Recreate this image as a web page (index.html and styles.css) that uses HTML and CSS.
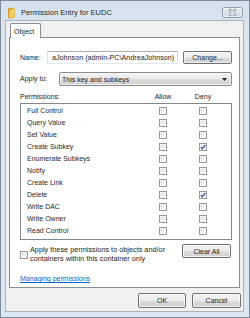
FILE: index.html
```html
<!DOCTYPE html>
<html>
<head>
<meta charset="utf-8">
<link rel="stylesheet" href="styles.css">
</head>
<body>
<div class="window">
  <div class="titlebar">
    <svg class="folder-icon" width="8" height="12" viewBox="0 0 8 12">
      <path d="M1 1.5 L6 0.5 L6 10 L1 11 Z" fill="#c9952a"/>
      <path d="M2 2.5 L7.5 1.5 L7.5 10.5 L2 11.5 Z" fill="#f3cf5f" stroke="#d9a93a" stroke-width="0.6"/>
    </svg>
    <span class="title">Permission Entry for EUDC</span>
    <div class="close-btn">
      <svg width="19" height="9" viewBox="0 0 19 9">
        <path d="M7 2 L12 7 M12 2 L7 7" stroke="#7d8896" stroke-width="2.6" stroke-linecap="round"/>
        <path d="M7 2 L12 7 M12 2 L7 7" stroke="#ffffff" stroke-width="1.1" stroke-linecap="round"/>
      </svg>
    </div>
  </div>
  <div class="client">
    <div class="tabs"><div class="tab">Object</div></div>
    <div class="panel">
      <div class="name-row">
        <span class="lbl name-lbl">Name:</span>
        <div class="textbox"><span class="textbox-text">aJohnson (admin-PC\AndreaJohnson)</span></div>
        <div class="btn change-btn">Change...</div>
      </div>
      <div class="apply-row">
        <span class="lbl apply-lbl">Apply to:</span>
        <div class="combo">
          <span class="combo-text">This key and subkeys</span>
          <svg class="combo-arrow" width="5" height="3" viewBox="0 0 5 3"><path d="M0 0 L5 0 L2.5 3 Z" fill="#222"/></svg>
        </div>
      </div>
      <div class="perm-header">
        <span class="perm-title">Permissions:</span>
        <span class="col-lbl">Allow</span>
        <span></span>
        <span class="col-lbl">Deny</span>
      </div>
      <div class="perm-list">
        <div class="perm-row"><span>Full Control</span><span class="cb"></span><span></span><span class="cb"></span></div>
        <div class="perm-row"><span>Query Value</span><span class="cb"></span><span></span><span class="cb"></span></div>
        <div class="perm-row"><span>Set Value</span><span class="cb"></span><span></span><span class="cb"></span></div>
        <div class="perm-row"><span>Create Subkey</span><span class="cb"></span><span></span><span class="cb"><svg width="6" height="6" viewBox="0 0 6 6"><path d="M0.8 3 L2.3 4.8 L5.3 0.8" stroke="#2f4596" stroke-width="1.1" fill="none"/></svg></span></div>
        <div class="perm-row"><span>Enumerate Subkeys</span><span class="cb"></span><span></span><span class="cb"></span></div>
        <div class="perm-row"><span>Notify</span><span class="cb"></span><span></span><span class="cb"></span></div>
        <div class="perm-row"><span>Create Link</span><span class="cb"></span><span></span><span class="cb"></span></div>
        <div class="perm-row"><span>Delete</span><span class="cb"></span><span></span><span class="cb"><svg width="6" height="6" viewBox="0 0 6 6"><path d="M0.8 3 L2.3 4.8 L5.3 0.8" stroke="#2f4596" stroke-width="1.1" fill="none"/></svg></span></div>
        <div class="perm-row"><span>Write DAC</span><span class="cb"></span><span></span><span class="cb"></span></div>
        <div class="perm-row"><span>Write Owner</span><span class="cb"></span><span></span><span class="cb"></span></div>
        <div class="perm-row"><span>Read Control</span><span class="cb"></span><span></span><span class="cb"></span></div>
      </div>
      <div class="inherit-row">
        <span class="cb inherit-cb"></span>
        <span class="inherit-text">Apply these permissions to objects and/or<br>containers within this container only</span>
        <div class="btn clear-btn">Clear All</div>
      </div>
      <a class="link" href="#">Managing permissions</a>
    </div>
    <div class="dialog-buttons">
      <div class="btn ok-btn">OK</div>
      <div class="btn cancel-btn">Cancel</div>
    </div>
  </div>
</div>
</body>
</html>
```

FILE: styles.css
```css
* { box-sizing: border-box; }
html, body { margin: 0; padding: 0; }
body {
  width: 250px;
  height: 318px;
  overflow: hidden;
  font-family: "Liberation Sans", Arial, sans-serif;
  font-size: 7px;
  color: #1e1e1e;
  background: #ffffff;
}
.window {
  width: 250px;
  height: 318px;
  border: 1px solid #7d8a9a;
  background: linear-gradient(#d5e1ee, #dce6f1 40px, #dde7f2);
  padding: 0 5px 5px 4px;
  display: flex;
  flex-direction: column;
}
.titlebar {
  height: 19px;
  display: flex;
  align-items: center;
  padding: 4px 0 0 2px;
}
.folder-icon { display: block; margin-right: 6px; }
.title {
  font-size: 7.5px;
  color: #2a2a2a;
  white-space: nowrap;
}
.close-btn {
  margin-left: auto;
  margin-right: 1px;
  width: 21px;
  height: 11px;
  border: 1px solid #8f9cad;
  border-radius: 3px;
  background: linear-gradient(#eef3f8, #dbe3ec 50%, #cfd9e5 51%, #dde5ee);
  box-shadow: inset 0 0 0 1px rgba(255,255,255,0.6);
  display: flex;
  align-items: center;
  justify-content: center;
}
.close-btn svg { display: block; }
.client {
  width: 239px;
  height: 292px;
  border: 1px solid #a7b4c4;
  background: #f0f0f0;
  display: flex;
  flex-direction: column;
}
.tabs {
  display: flex;
  margin-top: 2px;
  padding-left: 4px;
}
.tab {
  position: relative;
  z-index: 1;
  width: 31px;
  height: 15px;
  margin-bottom: -1px;
  border: 1px solid #898c95;
  border-bottom: none;
  border-radius: 2px 2px 0 0;
  background: #ffffff;
  padding: 3px 0 0 3px;
  line-height: 9px;
}
.panel {
  margin-left: 3px;
  width: 231px;
  height: 251px;
  border: 1px solid #898c95;
  background: #ffffff;
  padding: 13px 7px 0 10px;
  display: flex;
  flex-direction: column;
}
.lbl { line-height: 13px; flex: none; }
.name-row {
  display: flex;
  height: 13px;
}
.name-lbl { width: 27px; }
.textbox {
  flex: 1;
  min-width: 0;
  border: 1px solid;
  border-color: #abadb3 #dbdfe6 #e3e9ef #e2e3ea;
  background: #fff;
  display: flex;
  overflow: hidden;
  padding-left: 4px;
}
.textbox-text { white-space: nowrap; line-height: 11px; font-size: 7.2px; }
.btn {
  border: 1px solid #707070;
  border-radius: 2px;
  background: linear-gradient(#f2f2f2, #ebebeb 50%, #dddddd 51%, #cfcfcf);
  box-shadow: inset 0 0 0 1px rgba(255,255,255,0.7);
  display: flex;
  align-items: center;
  justify-content: center;
  color: #1e1e1e;
  white-space: nowrap;
  flex: none;
}
.change-btn { width: 49px; margin-left: 5px; }
.apply-row {
  display: flex;
  height: 14px;
  margin-top: 8px;
}
.apply-lbl { width: 39px; line-height: 14px; }
.combo {
  flex: 1;
  border: 1px solid #8a8a8a;
  border-radius: 2px;
  background: linear-gradient(#f2f2f2, #ebebeb 50%, #dddddd 51%, #cfcfcf);
  box-shadow: inset 0 0 0 1px rgba(255,255,255,0.7);
  display: flex;
  align-items: center;
  padding: 0 4px 0 2px;
}
.combo-text { flex: 1; }
.combo-arrow { display: block; }
.perm-header {
  display: grid;
  grid-template-columns: 139px 8px 32px 8px;
  height: 8px;
  line-height: 8px;
  margin-top: 7px;
}
.col-lbl {
  display: flex;
  justify-content: center;
  width: 8px;
  white-space: nowrap;
}
.perm-list {
  margin-top: 2px;
  height: 137px;
  border: 1px solid #828790;
  padding-top: 1px;
}
.perm-row {
  display: grid;
  grid-template-columns: 132px 8px 32px 8px;
  height: 12px;
  align-items: center;
  padding-left: 6px;
  line-height: 12px;
  color: #2a2a2a;
}
.cb {
  width: 8px;
  height: 8px;
  border: 1px solid #9a9a9a;
  background: linear-gradient(135deg, #d4d4d4, #f4f4f4 70%, #fcfcfc);
  box-shadow: inset 0 0 0 1px #f7f7f7;
  display: flex;
  align-items: center;
  justify-content: center;
}
.cb svg { display: block; }
.inherit-row {
  display: flex;
  align-items: flex-start;
  margin-top: 4px;
}
.inherit-cb { margin-top: 7px; flex: none; }
.inherit-text {
  margin-left: 2px;
  padding-top: 1px;
  line-height: 9px;
  white-space: nowrap;
  font-size: 7.3px;
}
.clear-btn {
  width: 49px;
  height: 14px;
  margin-left: auto;
  margin-right: 1px;
}
.link {
  margin-top: 11px;
  color: #0066cc;
  text-decoration: underline;
  line-height: 9px;
  align-self: flex-start;
}
.dialog-buttons {
  display: flex;
  justify-content: flex-end;
  gap: 6px;
  margin-top: 5px;
  padding-right: 2px;
}
.ok-btn { width: 48px; height: 15px; }
.cancel-btn { width: 49px; height: 15px; }
```
